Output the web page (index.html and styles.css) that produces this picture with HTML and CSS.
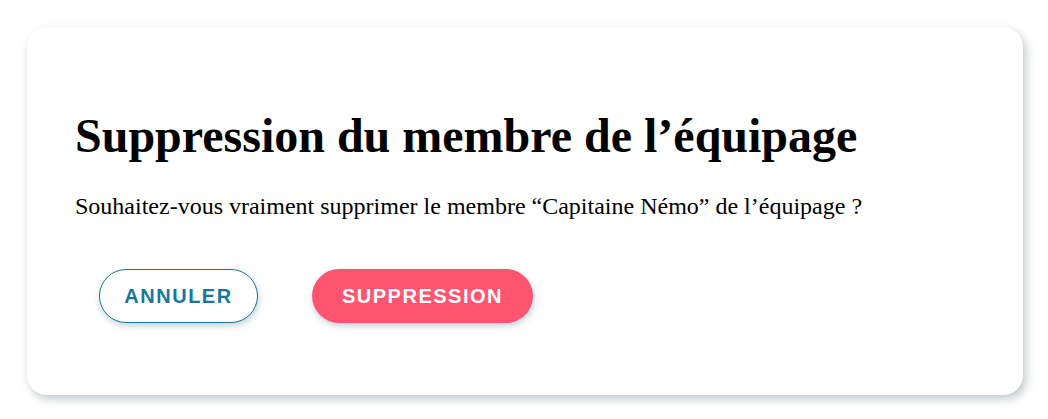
FILE: index.html
```html
<!DOCTYPE html>
<html lang="fr">
<head>
<meta charset="utf-8">
<link rel="stylesheet" href="styles.css">
</head>
<body>
<div class="page">
  <div class="card">
    <h1 class="title">Suppression du membre de l’équipage</h1>
    <p class="message">Souhaitez-vous vraiment supprimer le membre “Capitaine Némo” de l’équipage ?</p>
    <div class="actions">
      <button class="btn btn-cancel">ANNULER</button>
      <button class="btn btn-delete">SUPPRESSION</button>
    </div>
  </div>
</div>
</body>
</html>
```
FILE: styles.css
```css
html, body {
  margin: 0;
  padding: 0;
  background: #ffffff;
}
.page {
  padding: 27px 25px 24px 27px;
}
.card {
  background: #ffffff;
  border-radius: 20px;
  box-shadow: 3px 4px 10px rgba(120, 135, 140, 0.45);
  padding: 81px 48px 72px 48px;
  font-family: "Liberation Serif", "Times New Roman", serif;
  color: #000;
}
.title {
  margin: 0;
  font-size: 48px;
  font-weight: bold;
  line-height: 55px;
}
.message {
  margin: 29px 0 0 0;
  font-size: 24px;
  line-height: 28px;
}
.actions {
  display: flex;
  gap: 54px;
  margin-top: 49px;
  padding-left: 24px;
}
.btn {
  height: 54px;
  border-radius: 27px;
  font-family: "Liberation Sans", Arial, sans-serif;
  font-weight: bold;
  font-size: 20px;
  letter-spacing: 1.5px;
  cursor: pointer;
  box-shadow: 1px 3px 6px rgba(90, 130, 150, 0.35);
}
.btn-cancel {
  width: 159px;
  background: #fff;
  color: #17779a;
  border: 1px solid #17779a;
}
.btn-delete {
  width: 221px;
  background: #ff5470;
  color: #fff;
  border: none;
}
```
